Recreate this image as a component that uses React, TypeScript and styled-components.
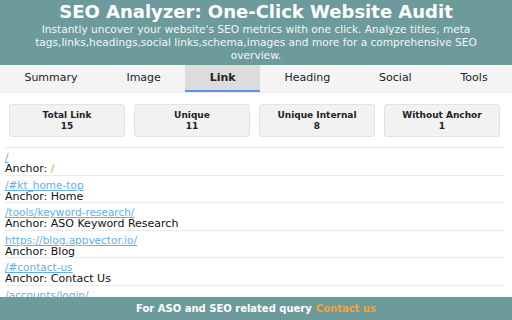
import React from "react";
import styled, { createGlobalStyle } from "styled-components";

const GlobalStyle = createGlobalStyle`
  html, body {
    margin: 0;
    padding: 0;
    background: #ffffff;
    font-family: "DejaVu Sans", Verdana, sans-serif;
  }
`;

const Page = styled.div`
  display: flex;
  flex-direction: column;
  width: 512px;
  height: 320px;
  overflow: hidden;
`;

const Header = styled.header`
  flex: none;
  background: #6d9b9c;
  color: #ffffff;
  text-align: center;
  padding: 1px 14px 0;
  height: 65px;
  box-sizing: border-box;
`;

const Title = styled.h1`
  margin: 0 -10px;
  font-size: 18px;
  line-height: 21px;
  font-weight: bold;
`;

const Subtitle = styled.p`
  margin: 1px 0 0;
  font-size: 10.6px;
  line-height: 13px;
  color: #f2f6f6;
`;

const TabBar = styled.nav`
  flex: none;
  display: flex;
  height: 27px;
  background: #f4f4f4;
  border-bottom: 1px solid #ececec;
`;

const Tab = styled.div<{ $active?: boolean }>`
  flex: 1 1 auto;
  display: flex;
  align-items: center;
  justify-content: center;
  font-size: 11px;
  color: #222222;
  font-weight: ${(p) => (p.$active ? "bold" : "normal")};
  background: ${(p) => (p.$active ? "#dcdcdc" : "transparent")};
  border-bottom: 2px solid ${(p) => (p.$active ? "#5d92ee" : "transparent")};
  box-sizing: border-box;
`;

const Content = styled.main`
  flex: 1;
  overflow: hidden;
`;

const Stats = styled.div`
  display: grid;
  grid-template-columns: repeat(4, 1fr);
  gap: 9px;
  padding: 11px 12px 0 9px;
`;

const StatCard = styled.div`
  background: #f2f2f2;
  border: 1px solid #e3e3e3;
  border-radius: 3px;
  height: 33px;
  box-sizing: border-box;
  display: flex;
  flex-direction: column;
  justify-content: center;
  align-items: center;
  font-size: 9px;
  line-height: 11px;
  font-weight: bold;
  color: #222222;
`;

const LinkList = styled.ul`
  list-style: none;
  margin: 10px 8px 0 5px;
  padding: 0;
`;

const LinkRow = styled.li`
  border-top: 1px solid #e6eaf2;
  padding-top: 3px;
  height: 27.5px;
  box-sizing: border-box;
`;

const Url = styled.a`
  display: block;
  font-size: 10.5px;
  line-height: 12px;
  color: #66aee8;
  text-decoration: underline;
`;

const Anchor = styled.div`
  font-size: 11px;
  line-height: 12.5px;
  color: #111111;
`;

const Slash = styled.span`
  color: #e8a03c;
`;

const Footer = styled.footer`
  flex: none;
  background: #6d9b9c;
  height: 23px;
  display: flex;
  align-items: center;
  justify-content: center;
  font-size: 10px;
  font-weight: bold;
  color: #ffffff;
  white-space: nowrap;
`;

const Contact = styled.span`
  color: #f2a43a;
  margin-left: 4px;
`;

const tabs = ["Summary", "Image", "Link", "Heading", "Social", "Tools"];

const stats = [
  { label: "Total Link", value: 15 },
  { label: "Unique", value: 11 },
  { label: "Unique Internal", value: 8 },
  { label: "Without Anchor", value: 1 },
];

const links = [
  { url: "/", anchor: "/" },
  { url: "/#kt_home-top", anchor: "Home" },
  { url: "/tools/keyword-research/", anchor: "ASO Keyword Research" },
  { url: "https://blog.appvector.io/", anchor: "Blog" },
  { url: "/#contact-us", anchor: "Contact Us" },
  { url: "/accounts/login/", anchor: "Login" },
];

const App: React.FC = () => {
  return (
    <Page>
      <GlobalStyle />
      <Header>
        <Title>SEO Analyzer: One-Click Website Audit</Title>
        <Subtitle>
          Instantly uncover your website's SEO metrics with one click. Analyze
          titles, meta tags,links,headings,social links,schema,images and more
          for a comprehensive SEO overview.
        </Subtitle>
      </Header>
      <TabBar>
        {tabs.map((t) => (
          <Tab key={t} $active={t === "Link"}>
            {t}
          </Tab>
        ))}
      </TabBar>
      <Content>
        <Stats>
          {stats.map((s) => (
            <StatCard key={s.label}>
              <span>{s.label}</span>
              <span>{s.value}</span>
            </StatCard>
          ))}
        </Stats>
        <LinkList>
          {links.map((l) => (
            <LinkRow key={l.url}>
              <Url href="#">{l.url}</Url>
              <Anchor>
                Anchor:{" "}
                {l.anchor === "/" ? <Slash>/</Slash> : l.anchor}
              </Anchor>
            </LinkRow>
          ))}
        </LinkList>
      </Content>
      <Footer>
        For ASO and SEO related query<Contact>Contact us</Contact>
      </Footer>
    </Page>
  );
};

export default App;
